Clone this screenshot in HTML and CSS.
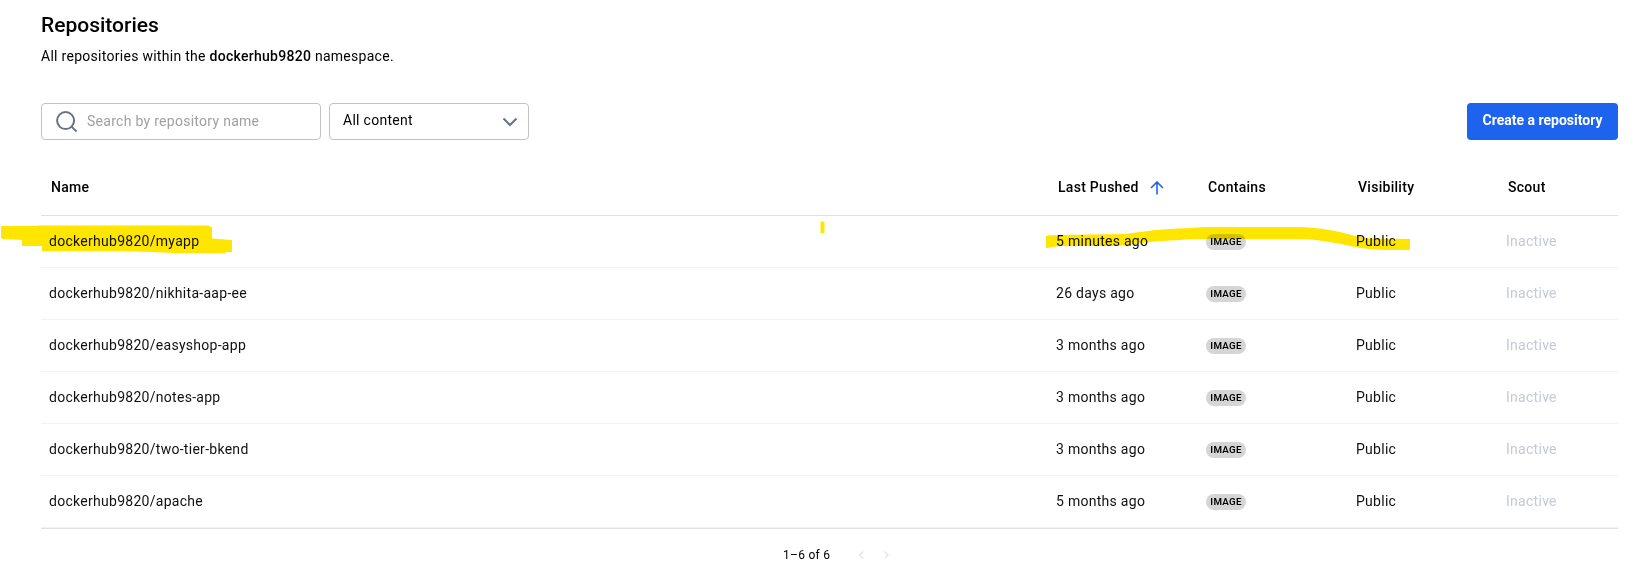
FILE: index.html
```html
<!DOCTYPE html>
<html lang="en">
<head>
<meta charset="utf-8">
<title>Repositories</title>
<link rel="stylesheet" href="styles.css">
</head>
<body>
<main class="page">
  <h1 class="title">Repositories</h1>
  <p class="subtitle">All repositories within the <strong>dockerhub9820</strong> namespace.</p>

  <div class="toolbar">
    <label class="search">
      <svg class="search-icon" width="22" height="22" viewBox="0 0 22 22"><circle cx="9.6" cy="9.6" r="8.5"/><path d="M15.6 15.6 20.6 20.6"/></svg>
      <span>Search by repository name</span>
    </label>
    <div class="select">
      <span>All content</span>
      <svg class="chevron" width="16" height="10" viewBox="0 0 16 10"><path d="M1.5 1.5 8 8l6.500-6.500"/></svg>
    </div>
    <button class="create">Create a repository</button>
  </div>

  <section class="table">
    <div class="row head">
      <span>Name</span>
      <span class="sorted">Last Pushed <svg class="arrow" width="14" height="14" viewBox="0 0 14 14"><path d="M7 13.500V1.200M1 7l6-6 6 6"/></svg></span>
      <span>Contains</span><span>Visibility</span><span>Scout</span>
    </div>
    <div class="row"><span>dockerhub9820/myapp</span><span>5 minutes ago</span><span class="tag"><b class="pill">IMAGE</b></span><span>Public</span><span class="inactive">Inactive</span></div>
    <div class="row"><span>dockerhub9820/nikhita-aap-ee</span><span>26 days ago</span><span class="tag"><b class="pill">IMAGE</b></span><span>Public</span><span class="inactive">Inactive</span></div>
    <div class="row"><span>dockerhub9820/easyshop-app</span><span>3 months ago</span><span class="tag"><b class="pill">IMAGE</b></span><span>Public</span><span class="inactive">Inactive</span></div>
    <div class="row"><span>dockerhub9820/notes-app</span><span>3 months ago</span><span class="tag"><b class="pill">IMAGE</b></span><span>Public</span><span class="inactive">Inactive</span></div>
    <div class="row"><span>dockerhub9820/two-tier-bkend</span><span>3 months ago</span><span class="tag"><b class="pill">IMAGE</b></span><span>Public</span><span class="inactive">Inactive</span></div>
    <div class="row"><span>dockerhub9820/apache</span><span>5 months ago</span><span class="tag"><b class="pill">IMAGE</b></span><span>Public</span><span class="inactive">Inactive</span></div>
  </section>

  <footer class="pager">
    <span>1–6 of 6</span>
    <svg class="page-arrow" width="5" height="8" viewBox="0 0 5 8"><path d="M4.300.5.8 4l3.500 3.500"/></svg>
    <svg class="page-arrow next" width="5" height="8" viewBox="0 0 5 8"><path d="M.7.5 4.200 4 .7 7.500"/></svg>
  </footer>
</main>

<!-- Highlighter strokes over the first row -->
<svg class="marker" width="1636" height="570" viewBox="0 0 1636 570">
  <path d="M1 227Q1 226 2 226H36L37 225.500H207Q211 226 212 228V238.500L232 240V252H226V253Q185 254 150 252L120 251H42V246H22V240L3 239Q1 239 1 237Z"/>
  <path d="M1046 236Q1049 235 1060 235L1125 234Q1140 232 1155 230Q1180 228 1192 228Q1200 227 1210 227H1302Q1322 228 1340 232Q1358 237 1370 238.500L1410 239V250H1390Q1368 250 1350 246Q1318 239 1300 239H1210Q1190 239 1180 240Q1150 241 1130 245L1110 246L1060 246L1046 248Z"/>
  <path d="M820.500 221.500H824.500V233H820.500Z"/>
</svg>
</body>
</html>
```
FILE: styles.css
```css
* { box-sizing: border-box; }
body { margin: 0; background: #fff; color: #000; font: 400 14px/20px Roboto, "Liberation Sans", sans-serif; letter-spacing: 0.28px; }
.page { width: 1636px; height: 570px; padding: 13px 18px 0 41px; overflow: hidden; }
.title { margin: 0; font-size: 21px; line-height: 24px; font-weight: 500; letter-spacing: 0; }
.subtitle { margin: 9px 0 0; }
.subtitle strong { font-weight: 500; }

.toolbar { display: flex; gap: 8px; margin-top: 37px; height: 37px; }
.search, .select { display: flex; align-items: center; border: 1px solid #c2c2c2; border-radius: 4px; }
.search { width: 280px; padding-left: 14px; gap: 9px; color: #a0a0a0; }
.search span { padding-bottom: 2px; }
.select { width: 200px; padding: 0 10px 0 13px; justify-content: space-between; }
.select span { padding-bottom: 4px; }
.search-icon, .chevron { fill: none; stroke: #677285; stroke-width: 2; }
.chevron { margin-top: 1px; }
.create { margin-left: auto; width: 151px; border: 0; border-radius: 4px; background: #1d63ed; color: #fff; font: 700 14px/20px Roboto, sans-serif; letter-spacing: 0; padding: 0 0 4px; }

.table { margin-top: 20px; border-bottom: 1px solid #e0e0e0; }
.row { display: grid; grid-template-columns: 1007px 150px 150px 150px 120px; align-items: center; height: 52px; border-bottom: 1px solid #f3f3f3; color: #101010; }
.row > span { padding: 0 0 2px 8px; }
.row > .tag { padding-bottom: 0; }
.head { height: 56px; border-bottom-color: #e0e0e0; color: #000; font-weight: 500; }
.head > span { padding-left: 10px; }
.sorted { display: flex; align-items: center; gap: 11px; }
.arrow { fill: none; stroke: #1d63ed; stroke-width: 1.600; margin-top: 2px; }
.pill { display: flex; align-items: center; justify-content: center; width: 40px; height: 16px; border-radius: 8px; background: #d5d5d5; color: #000; font-size: 9.75px; font-weight: 600; letter-spacing: 0.28px; }
.row .inactive { color: #c4c9d4; }

.pager { display: flex; align-items: center; padding: 16px 0 0 742px; font-size: 12px; }
.page-arrow { margin-left: 29px; fill: none; stroke: #e3e3e3; stroke-width: 1.300; }
.page-arrow.next { margin-left: 20px; }

.marker { position: absolute; left: 0; top: 0; fill: #ffe600; mix-blend-mode: multiply; pointer-events: none; }
```
